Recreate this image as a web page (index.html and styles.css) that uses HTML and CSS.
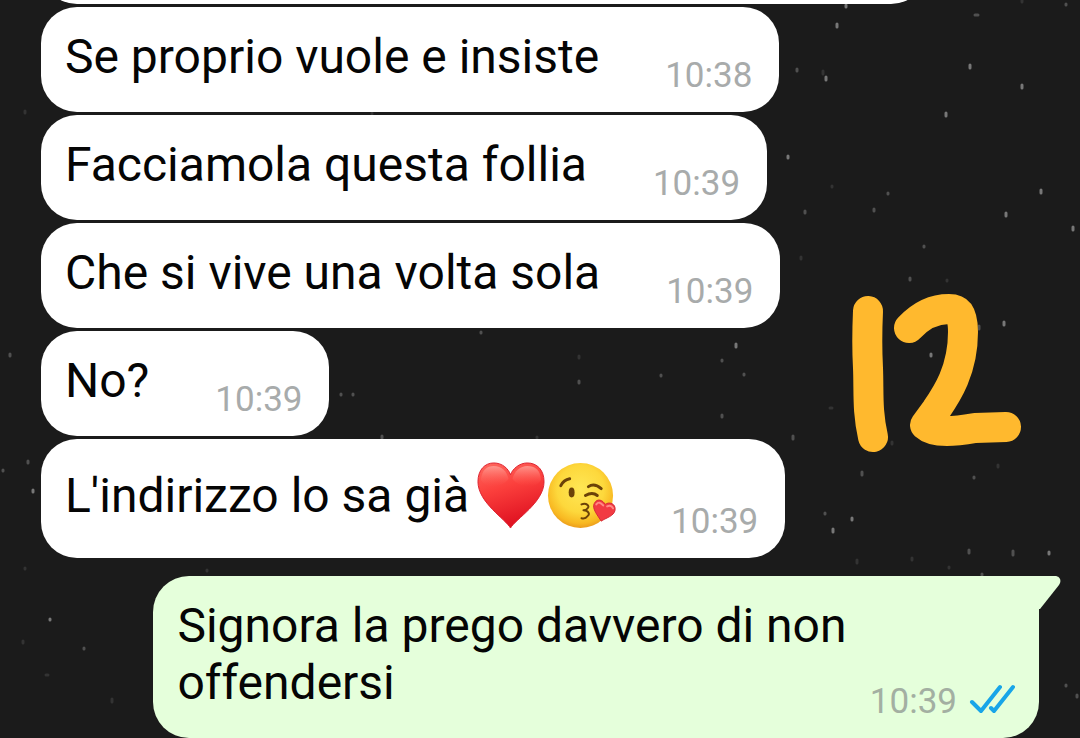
FILE: index.html
```html
<!DOCTYPE html>
<html lang="it">
<head>
<meta charset="utf-8">
<meta name="viewport" content="width=device-width, initial-scale=1">
<title>Chat</title>
<link rel="stylesheet" href="styles.css">
</head>
<body>
<main class="chat">
  <svg class="wallpaper" viewBox="0 0 1080 738" preserveAspectRatio="xMidYMid slice" aria-hidden="true">
    <g class="stars-bright">
      <path d="M846 5v2M837 24v3M826 77v3M970 65v3M1022 85v3M946 113v3M788 156v2M1041 190v3M1006 213v3M1073 227v3M852 518v2M833 529v3M1049 552v2M1004 322v3M931 354v2M736 344v3M33 490v2M50 619v1"/>
    </g>
    <g class="stars-mid">
      <path d="M797 69v2M975 15h3M888 193v1M874 209v2M805 211v2M924 246v1M910 278v2M862 472v3M974 477v1M825 513v1M969 550v3M1013 551v4M982 574v1M28 461v2M3 470v1M10 354v2M722 360v1M744 374v1M722 415v2M793 436v3M661 375v1M481 332v1M579 381v2M341 394v1M353 394v1M979 326v3M1066 685v1M1077 695v2M382 436v2M1066 4v1M84 648v1"/>
    </g>
    <g class="stars-dim">
      <path d="M823 71v3M801 257v2M857 560v3M912 558v2M998 465v2M25 568v1M23 641v2M46 675h2M112 699v3M25 111v2M579 356v2M537 437v1M830 408h2M892 442v2M1022 0v2M949 567v1M207 570v1M372 113v1M947 280v1M832 186v1"/>
    </g>
  </svg>

  <article class="bubble bubble-in bubble-earlier" aria-hidden="true"></article>

  <article class="bubble bubble-in">
    <p class="text">Se proprio vuole e insiste</p>
    <time class="time" datetime="10:38">10:38</time>
  </article>
  <article class="bubble bubble-in">
    <p class="text">Facciamola questa follia</p>
    <time class="time" datetime="10:39">10:39</time>
  </article>
  <article class="bubble bubble-in">
    <p class="text">Che si vive una volta sola</p>
    <time class="time" datetime="10:39">10:39</time>
  </article>
  <article class="bubble bubble-in">
    <p class="text">No?</p>
    <time class="time" datetime="10:39">10:39</time>
  </article>
  <article class="bubble bubble-in bubble-compact">
    <p class="text text-emoji">
      <span>L'indirizzo lo sa già</span>
      <span class="emojis">
        <svg class="emoji" viewBox="0 0 72 72" role="img" aria-label="cuore rosso">
          <defs>
            <linearGradient id="heart-fill" x1="0" y1="0" x2="0.3" y2="1">
              <stop offset="0" stop-color="#ff6a60"/>
              <stop offset="0.45" stop-color="#fb3f3c"/>
              <stop offset="1" stop-color="#e01322"/>
            </linearGradient>
            <linearGradient id="heart-shine" x1="0" y1="0" x2="0" y2="1">
              <stop offset="0" stop-color="#ffa59c" stop-opacity="0.8"/>
              <stop offset="1" stop-color="#ff5a50" stop-opacity="0"/>
            </linearGradient>
          </defs>
          <path d="M36 69C31 60 3 43 3 22C3 10 10 3 19 3C28 3 34 9 36 15C38 9 45 3 53 3C63 3 70 10 70 22C70 43 41 60 36 69Z" fill="url(#heart-fill)" stroke="#dc2330" stroke-width="1"/>
          <path d="M6 20C7 10 12 6 19 6C27 6 32 11 34 19C28 28 11 30 6 20Z" fill="url(#heart-shine)"/>
          <path d="M38 19C40 11 46 6 53 6C61 6 66 10 67 20C62 30 44 28 38 19Z" fill="url(#heart-shine)"/>
        </svg>
        <svg class="emoji" viewBox="0 0 72 72" role="img" aria-label="faccina che manda un bacio">
          <defs>
            <radialGradient id="face-fill" cx="0.5" cy="0.4" r="0.6">
              <stop offset="0" stop-color="#ffe755"/>
              <stop offset="0.6" stop-color="#fdd83c"/>
              <stop offset="0.88" stop-color="#f8b821"/>
              <stop offset="1" stop-color="#eb9c1c"/>
            </radialGradient>
          </defs>
          <circle cx="35" cy="36" r="33" fill="url(#face-fill)"/>
          <g fill="none" stroke="#6b4208" stroke-width="3" stroke-linecap="round" stroke-linejoin="round">
            <path d="M15 26Q18 20 24 19"/>
            <path d="M43 27Q49 23 56 29"/>
            <path d="M40 36Q47 32 52 36"/>
            <path d="M36 45C41 43 45 47 42 49Q41 51 38 51C43 51 45 55 42 57Q40 60 36 59" stroke-width="2"/>
          </g>
          <ellipse cx="26" cy="33" rx="3" ry="5" fill="#6b4208"/>
          <path d="M56 62C53 57 46 49 49 44C52 38 58 41 60 45C64 42 71 44 70 51C69 57 60 59 56 62Z" fill="#f23b43" stroke="#d52b36" stroke-width="1"/>
          <path d="M51 45Q54 41 58 46M62 47Q66 45 68 49" fill="none" stroke="#ff8a86" stroke-width="2" stroke-linecap="round"/>
        </svg>
      </span>
    </p>
    <time class="time" datetime="10:39">10:39</time>
  </article>

  <article class="bubble bubble-out">
    <p class="text">Signora la prego davvero di non offendersi</p>
    <span class="meta">
      <time class="time" datetime="10:39">10:39</time>
      <svg class="ticks" viewBox="0 0 46 30" role="img" aria-label="letto">
        <path d="M3 18L12 27L31 3M22 24L25 27L44 3"/>
      </svg>
    </span>
    <svg class="tail" viewBox="0 0 22 33" aria-hidden="true">
      <path d="M0 0H16C21 0 23 5 20 9L1 33H0Z"/>
    </svg>
  </article>

  <svg class="scribble" viewBox="0 0 180 170" role="img" aria-label="12">
    <path d="M22 23C21 45 21 62 22 80C23 105 21 122 27 149"/>
    <path d="M63 40C76 26 90 21 103 21C115 21 117 32 117 44C117 82 101 106 90 122L79 137C89 146 111 143 129 140L160 139"/>
  </svg>
</main>
</body>
</html>
```

FILE: styles.css
```css
* {
  box-sizing: border-box;
}

body {
  margin: 0;
  background: #1b1b1b;
  color: #050505;
  font-family: Roboto, "Noto Sans", sans-serif;
}

/* The list is anchored to its newest message; older ones run off the top. */
.chat {
  position: relative;
  display: flex;
  flex-direction: column;
  justify-content: flex-end;
  align-items: flex-start;
  gap: 3px;
  height: 100vh;
  padding: 0 41px;
  overflow: hidden;
}

.wallpaper {
  position: absolute;
  inset: 0;
  width: 100%;
  height: 100%;
  fill: none;
  stroke-width: 3;
  stroke-linecap: round;
}

.stars-bright {
  stroke: #777777;
}

.stars-mid {
  stroke: #505050;
}

.stars-dim {
  stroke: #333333;
}

.bubble {
  position: relative;
  flex-shrink: 0;
  max-width: 82vw;
  border-radius: 36px;
}

.bubble-in {
  display: flex;
  align-items: flex-end;
  gap: 66px;
  padding: 21px 27px 15px 24px;
  background: #ffffff;
}

.bubble-compact {
  gap: 54px;
}

.bubble-earlier {
  width: 82vw;
  height: 105px;
}

.bubble-out {
  display: grid;
  align-self: flex-end;
  margin-top: 15px;
  padding: 21px 24px 15px;
  border-top-right-radius: 0;
  background: #e5ffdb;
}

.bubble-out > .text,
.bubble-out > .meta {
  grid-area: 1 / 1;
}

.text {
  margin: 0 0 12px;
  font-size: 48px;
  line-height: 57px;
}

.text-emoji {
  display: flex;
  align-items: center;
  gap: 6px;
}

.emojis {
  display: flex;
}

.emoji {
  width: 71px;
  height: 71px;
}

.time {
  color: #a8abab;
  font-size: 35px;
  line-height: 42px;
}

.meta {
  display: flex;
  align-items: center;
  gap: 12px;
  align-self: end;
  justify-self: end;
}

.bubble-out .time {
  color: #a3afa2;
}

.ticks {
  width: 46px;
  height: 30px;
  margin-bottom: 6px;
  fill: none;
  stroke: #18a5e8;
  stroke-width: 4;
  stroke-linecap: round;
  stroke-linejoin: round;
}

.tail {
  position: absolute;
  top: 0;
  left: 100%;
  width: 22px;
  height: 33px;
  fill: #e5ffdb;
}

.scribble {
  position: absolute;
  top: 288px;
  right: 54px;
  width: 180px;
  height: 170px;
  fill: none;
  stroke: #ffb92e;
  stroke-width: 30;
  stroke-linecap: round;
  stroke-linejoin: round;
}
```
